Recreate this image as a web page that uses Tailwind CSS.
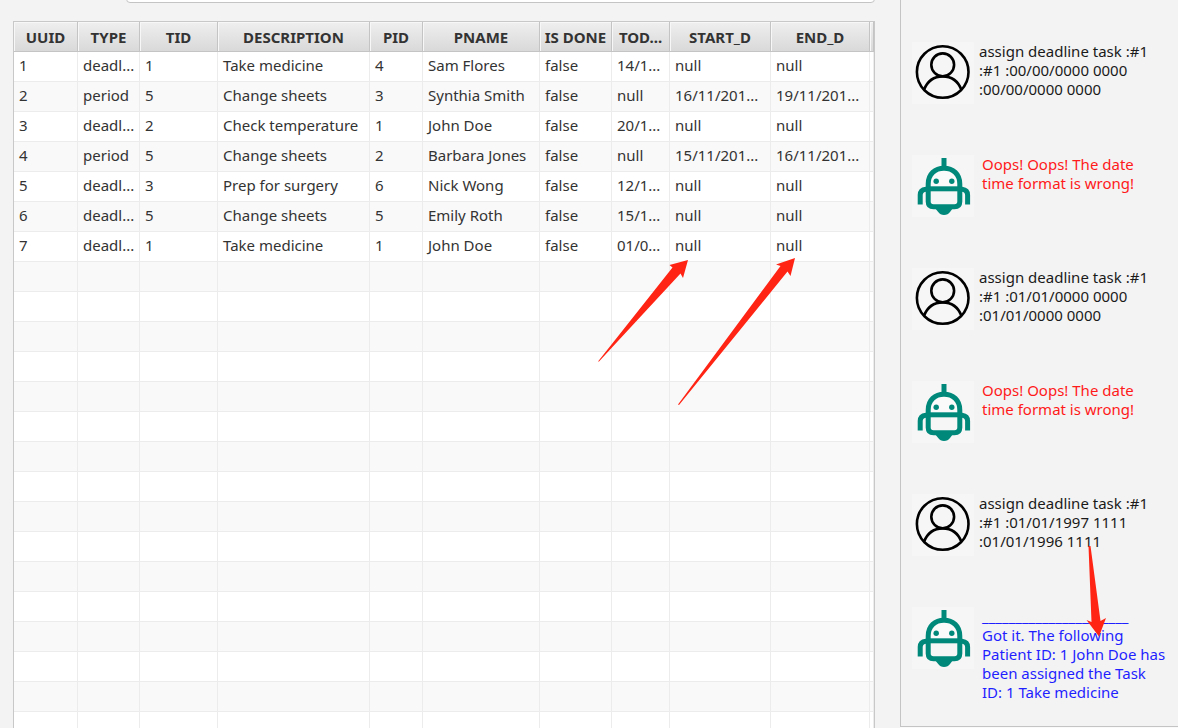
<!DOCTYPE html>
<html lang="en">
<head>
<meta charset="utf-8">
<title>Task manager</title>
<script src="https://cdn.jsdelivr.net/npm/@tailwindcss/browser@4"></script>
</head>
<body class="relative flex h-screen overflow-hidden bg-[#f3f3f3] font-['Noto_Sans','Open_Sans',sans-serif] text-[15px] text-[#333333]">

<svg class="hidden" aria-hidden="true">
  <symbol id="user" viewBox="0 0 62 62">
    <g fill="none" stroke="#000" stroke-width="2.6">
      <circle cx="30.7" cy="30" r="25.8"/>
      <circle cx="30.7" cy="22.8" r="11.4"/>
      <path d="M12 47.8C15.5 39 22.5 34.4 30.7 34.4S46 39 49.4 47.8"/>
    </g>
  </symbol>
  <symbol id="robot" viewBox="0 0 62 62">
    <path d="M16.5 34V29C16.5 19 23 13.2 32.2 13.2S48 19 48 29V34Z" fill="#fafafa"/>
    <g fill="none" stroke="#00897b" stroke-width="5">
      <path d="M32 3V13"/>
      <path d="M16.2 34V29C16.2 19 23 13.2 32 13.2S47.8 19 47.8 29V46.5Q47.8 51.8 42.5 51.8H21.5Q16.2 51.8 16.2 46.5Z"/>
      <path d="M16.2 33.8H47.8"/>
      <path d="M8.2 49.5V40Q8.2 35 14 34.3H16M55.6 49.5V40Q55.6 35 50 34.3H48"/>
    </g>
    <path d="M23 53H41Q39.5 55 38 57Q36 60 32 60Q28.2 60 26.2 57Q24.5 55 23 53Z" fill="#00897b"/>
    <circle cx="24.2" cy="26.3" r="2.7" fill="#00897b"/>
    <circle cx="39.8" cy="26.3" r="2.7" fill="#00897b"/>
  </symbol>
</svg>

<main class="flex min-w-0 flex-1 flex-col gap-[18px] pr-[25px] pl-[13px]">
  <input type="text" aria-label="Command" class="-mt-[29px] ml-[113px] h-8 shrink-0 rounded-[4px] border border-[#c4c4c4] bg-white px-2 outline-none">
  <div class="min-h-0 flex-1 overflow-hidden border border-b-0 border-[#c8c8c8] bg-white">
    <table class="w-full table-fixed border-separate border-spacing-0">
      <colgroup>
        <col class="w-[64px]"><col class="w-[62px]"><col class="w-[78px]"><col class="w-[152px]"><col class="w-[53px]"><col class="w-[117px]"><col class="w-[72px]"><col class="w-[58px]"><col class="w-[101px]"><col class="w-[99px]"><col>
      </colgroup>
      <thead><tr id="head"></tr></thead>
      <tbody id="rows"></tbody>
    </table>
  </div>
</main>

<aside class="flex w-[278px] shrink-0 flex-col">
  <div class="flex-1 border-b border-l border-[#c4c4c4] pt-[42px] pl-[11px]" id="chat"></div>
  <div class="h-px bg-[#fafafa]"></div>
</aside>

<svg class="pointer-events-none absolute top-0 left-0" width="1178" height="728" viewBox="0 0 1178 728" fill="#ff2414" aria-hidden="true">
  <path d="M598 361.5L672.5 267.5L669.5 265L688 260L683 278L680.5 273.5L599 361.5Z"/>
  <path d="M678 404.5L780.5 266L776 264.5L795 258L790.5 276L787.5 271.5L679 405Z"/>
  <path d="M1088.5 546L1090.5 546L1100.5 621L1106 618L1099 636.5L1086.5 620L1091.5 622Z"/>
</svg>

<script>
const columns = ["UUID", "TYPE", "TID", "DESCRIPTION", "PID", "PNAME", "IS DONE", "TOD...", "START_D", "END_D", ""];
const tasks = [
  ["1", "deadl...", "1", "Take medicine", "4", "Sam Flores", "false", "14/1...", "null", "null"],
  ["2", "period", "5", "Change sheets", "3", "Synthia Smith", "false", "null", "16/11/201...", "19/11/201..."],
  ["3", "deadl...", "2", "Check temperature", "1", "John Doe", "false", "20/1...", "null", "null"],
  ["4", "period", "5", "Change sheets", "2", "Barbara Jones", "false", "null", "15/11/201...", "16/11/201..."],
  ["5", "deadl...", "3", "Prep for surgery", "6", "Nick Wong", "false", "12/1...", "null", "null"],
  ["6", "deadl...", "5", "Change sheets", "5", "Emily Roth", "false", "15/1...", "null", "null"],
  ["7", "deadl...", "1", "Take medicine", "1", "John Doe", "false", "01/0...", "null", "null"]
];
document.getElementById("head").innerHTML = columns.map(c =>
  `<th class="h-[30px] border-r border-b border-[#c4c4c4] bg-linear-to-b from-[#efefef] to-[#d9d9d9] p-0 text-center leading-5 font-bold whitespace-nowrap shadow-[inset_1px_1px_0_#f7f7f7]">${c}</th>`).join("");
const blank = Array.from({ length: 16 }, () => []);
document.getElementById("rows").innerHTML = [...tasks, ...blank].map(r =>
  `<tr class="even:bg-[#f9f9f9]">` + columns.map((_, i) =>
    `<td class="h-[30px] border-r border-b border-[#ececec] pt-0 pr-0 ${i < 10 ? "pb-1 pl-[5px]" : "pb-1 pl-0"} leading-5 whitespace-nowrap">${r[i] || ""}</td>`).join("") + `</tr>`).join("");

const messages = [
  ["user", "assign deadline task :#1<br>:#1 :00/00/0000 0000<br>:00/00/0000 0000"],
  ["error", "Oops! Oops! The date<br>time format is wrong!"],
  ["user", "assign deadline task :#1<br>:#1 :01/01/0000 0000<br>:01/01/0000 0000"],
  ["error", "Oops! Oops! The date<br>time format is wrong!"],
  ["user", "assign deadline task :#1<br>:#1 :01/01/1997 1111<br>:01/01/1996 1111"],
  ["reply", "______________________<br>Got it. The following<br>Patient ID: 1 John Doe has<br>been assigned the Task<br>ID: 1 Take medicine"]
];
const look = {
  user: ["user", "gap-[5px] text-[#1a1a1a]"],
  error: ["robot", "gap-2 text-[#ff1a1a]"],
  reply: ["robot", "gap-2 text-[#1f1fff]"]
};
document.getElementById("chat").innerHTML = messages.map(([kind, text]) =>
  `<div class="flex h-[113px] items-start whitespace-nowrap leading-[19px] ${look[kind][1]}">
    <svg class="size-[62px] shrink-0 bg-[#f6f6f6]"><use href="#${look[kind][0]}"/></svg><p>${text}</p></div>`).join("");
</script>
</body>
</html>
